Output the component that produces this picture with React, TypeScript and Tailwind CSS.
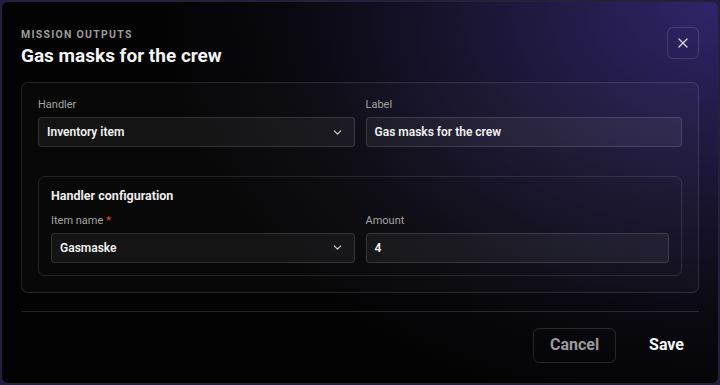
import { ChevronDown, X } from "lucide-react";

function Field({ label, value, select, required }: { label: string; value: string; select?: boolean; required?: boolean }) {
    return (
        <div className="flex flex-col">
            <label className="text-[11px] text-[#a3a3a3] leading-none mb-[7px]">
                {label}
                {required && <span className="text-[#e5484d] ml-[3px]">*</span>}
            </label>
            <div className="h-[30px] flex items-center justify-between px-[8px] rounded-[4px] border border-white/[0.13] bg-white/[0.05]">
                <span className="text-[12px] font-semibold text-[#f2f2f2]">{value}</span>
                {select && <ChevronDown className="w-[13px] h-[13px] text-[#d4d4d4] mr-[2px]" strokeWidth={2} />}
            </div>
        </div>
    );
}

export default function App() {
    return (
        <div className="w-[720px] h-[385px] bg-[#231d44] pt-[1px] pl-[1px] pr-[1px] font-['Roboto',sans-serif]">
            <div className="h-[383px] rounded-[7px] border border-[#26242e] bg-[#030303] bg-[radial-gradient(ellipse_560px_420px_at_100%_0%,#30256a_0%,#1c1738_40%,#0a0910_75%,#030303_100%)] flex flex-col">
                {/* header */}
                <div className="flex items-start justify-between px-[19px] pt-[25px] h-[57px]">
                    <div className="pt-[3px]">
                        <p className="text-[10.5px] font-bold tracking-[0.12em] text-[#9c9c9c] leading-none">MISSION OUTPUTS</p>
                        <h1 className="text-[19px] font-bold text-[#f4f4f4] leading-none mt-[5px]">Gas masks for the crew</h1>
                    </div>
                    <button className="w-[32px] h-[32px] rounded-[6px] border border-white/[0.13] flex items-center justify-center text-[#cfcfd6]">
                        <X className="w-[16px] h-[16px]" strokeWidth={2} />
                    </button>
                </div>
                {/* form panel */}
                <div className="mx-[19px] mt-[23px] rounded-[7px] border border-white/[0.11] bg-white/[0.025] px-[16px] pt-[16px] pb-[16px]">
                    <div className="grid grid-cols-2 gap-[11px]">
                        <Field label="Handler" value="Inventory item" select />
                        <Field label="Label" value="Gas masks for the crew" />
                    </div>
                    <div className="mt-[29px] rounded-[7px] border border-white/[0.11] px-[12px] pt-[13px] pb-[12px]">
                        <h2 className="text-[12.5px] font-bold text-[#ededed] leading-none mb-[12px]">Handler configuration</h2>
                        <div className="grid grid-cols-2 gap-[11px]">
                            <Field label="Item name" value="Gasmaske" select required />
                            <Field label="Amount" value="4" />
                        </div>
                    </div>
                </div>
                <div className="mx-[19px] mt-[18px] border-t border-white/[0.13]" />
                {/* footer */}
                <div className="flex justify-end items-center gap-[33px] pr-[34px] mt-[16px]">
                    <button className="h-[35px] w-[83px] rounded-[6px] border border-white/[0.13] text-[16px] font-bold text-[#9a9a9a]">Cancel</button>
                    <button className="text-[16px] font-bold text-[#f6f6f6]">Save</button>
                </div>
            </div>
        </div>
    );
}
